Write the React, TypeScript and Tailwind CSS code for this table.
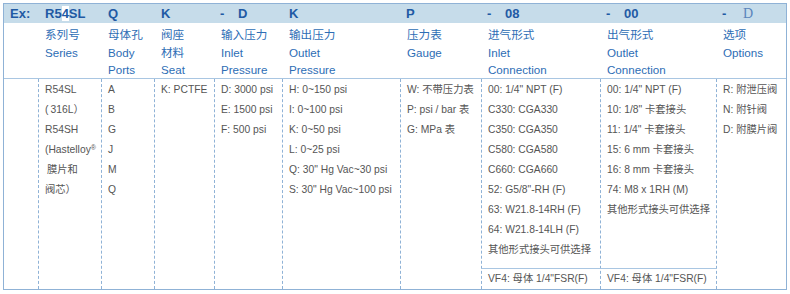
const grid = 'grid grid-cols-[34px_63px_53px_60px_68px_118px_81px_119px_116px_1fr]';

const labels: string[][] = [
  [],
  ['系列号', 'Series'],
  ['母体孔', 'Body', 'Ports'],
  ['阀座', '材料', 'Seat'],
  ['输入压力', 'Inlet', 'Pressure'],
  ['输出压力', 'Outlet', 'Pressure'],
  ['压力表', 'Gauge'],
  ['进气形式', 'Inlet', 'Connection'],
  ['出气形式', 'Outlet', 'Connection'],
  ['选项', 'Options'],
];

const body: { items: string[]; footer?: string }[] = [
  { items: ['A', 'B', 'G', 'J', 'M', 'Q'] },
  { items: ['K: PCTFE'] },
  { items: ['D: 3000 psi', 'E: 1500 psi', 'F: 500 psi'] },
  {
    items: [
      'H: 0~150 psi',
      'I: 0~100 psi',
      'K: 0~50 psi',
      'L: 0~25 psi',
      'Q: 30" Hg Vac~30 psi',
      'S: 30" Hg Vac~100 psi',
    ],
  },
  { items: ['W: 不带压力表', 'P: psi / bar 表', 'G: MPa 表'] },
  {
    items: [
      '00: 1/4" NPT (F)',
      'C330: CGA330',
      'C350: CGA350',
      'C580: CGA580',
      'C660: CGA660',
      '52: G5/8"-RH (F)',
      '63: W21.8-14RH (F)',
      '64: W21.8-14LH (F)',
      '其他形式接头可供选择',
    ],
    footer: 'VF4: 母体 1/4"FSR(F)',
  },
  {
    items: [
      '00: 1/4" NPT (F)',
      '10: 1/8" 卡套接头',
      '11: 1/4" 卡套接头',
      '15: 6 mm 卡套接头',
      '16: 8 mm 卡套接头',
      '74: M8 x 1RH (M)',
      '其他形式接头可供选择',
    ],
    footer: 'VF4: 母体 1/4"FSR(F)',
  },
  { items: ['R: 附泄压阀', 'N: 附针阀', 'D: 附膜片阀'] },
];

function Dash({ children }: { children: React.ReactNode }) {
  return (
    <span className="flex items-baseline">
      <span className="w-[18px]">-</span>
      {children}
    </span>
  );
}

export default function App() {
  return (
    <div className="bg-white w-[790px] h-[294px] pt-[3px] pl-[3px] font-['Liberation_Sans','Noto_Sans_CJK_SC',sans-serif]">
      <div className="w-[784px] border border-[#8fb2d6]">
        {/* Header bar */}
        <div className={`${grid} h-[19px] bg-[#c6dcea] items-center text-[13px] font-bold text-[#1f5aa4] leading-none`}>
          <div className="pl-[6px]">Ex:</div>
          <div className="pl-[7px]">
            R5<span className="bg-white">4</span>SL
          </div>
          <div className="pl-[7px]">Q</div>
          <div className="pl-[7px]">K</div>
          <div className="pl-[6px]">
            <Dash>D</Dash>
          </div>
          <div className="pl-[7px]">K</div>
          <div className="pl-[6px]">P</div>
          <div className="pl-[6px]">
            <Dash>08</Dash>
          </div>
          <div className="pl-[6px]">
            <Dash>00</Dash>
          </div>
          <div className="pl-[6px]">
            <span className="flex items-baseline">
              <span className="w-[21px]">-</span>
              <span className="font-['Liberation_Serif',serif] font-normal text-[14px] text-[#5a84bb]">D</span>
            </span>
          </div>
        </div>

        {/* Labels */}
        <div className={`${grid} h-[56px] pt-[3px] text-[11.6px] leading-[17.5px] text-[#2d6db5] border-b border-[#a9c6e2]`}>
          {labels.map((lines, i) => (
            <div key={i} className={i === 0 ? 'pl-[6px]' : 'pl-[7px]'}>
              {lines.map((l) => (
                <div key={l}>{l}</div>
              ))}
            </div>
          ))}
        </div>

        {/* Body */}
        <div className={`${grid} h-[210px] text-[10.3px] leading-[20px] text-[#555555]`}>
          <div />
          <div className="border-l border-dashed border-[#8fb2d6] pl-[6px] pt-px">
            <div>R54SL</div>
            <div>(&thinsp;316L）</div>
            <div>R54SH</div>
            <div>
              (Hastelloy<sup className="text-[7px]">®</sup>
            </div>
            <div className="pl-[2px]">膜片和</div>
            <div>阀芯）</div>
          </div>
          {body.map((col, i) => (
            <div key={i} className="border-l border-dashed border-[#8fb2d6] flex flex-col">
              <div className="flex-1 pl-[6px] pt-px">
                {col.items.map((t) => (
                  <div key={t} className="whitespace-nowrap">
                    {t}
                  </div>
                ))}
              </div>
              {col.footer && (
                <div className="h-[21px] border-t border-[#a9c6e2] pl-[6px] leading-[20px] whitespace-nowrap">
                  {col.footer}
                </div>
              )}
            </div>
          ))}
        </div>
      </div>
    </div>
  );
}
